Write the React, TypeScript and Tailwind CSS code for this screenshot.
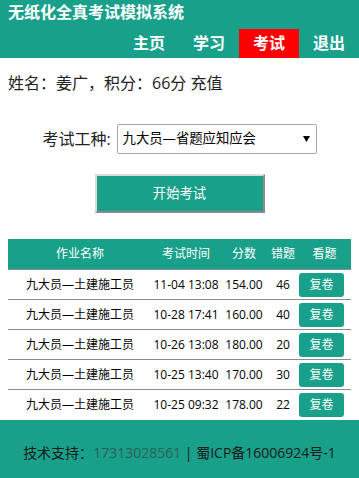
import React from "react";

const rows = [
  { name: "九大员—土建施工员", time: "11-04 13:08", score: "154.00", wrong: "46" },
  { name: "九大员—土建施工员", time: "10-28 17:41", score: "160.00", wrong: "40" },
  { name: "九大员—土建施工员", time: "10-26 13:08", score: "180.00", wrong: "20" },
  { name: "九大员—土建施工员", time: "10-25 13:40", score: "170.00", wrong: "30" },
  { name: "九大员—土建施工员", time: "10-25 09:32", score: "178.00", wrong: "22" },
];

const font = { fontFamily: '"Open Sans", "Noto Sans CJK SC", sans-serif' };

export default function App() {
  return (
    <div className="w-[359px] bg-white text-[#333]" style={font}>
      <header className="bg-[#18a08a] text-white font-bold text-[16px]">
        <div className="h-[29px] pl-2 leading-[25px]">无纸化全真考试模拟系统</div>
        <nav className="flex justify-end h-[29px]">
          <a className="w-[60px] text-center leading-[28px]">主页</a>
          <a className="w-[60px] text-center leading-[28px]">学习</a>
          <a className="w-[60px] text-center leading-[28px] bg-[#ff0000]">考试</a>
          <a className="w-[60px] text-center leading-[28px]">退出</a>
        </nav>
      </header>

      <div className="mt-[13px] h-[24px] pl-2 text-[16px] leading-[24px] text-[#222]">
        姓名：姜广，积分：66分 充值
      </div>

      <div className="mt-[29px] flex items-center justify-center gap-[6px]">
        <span className="text-[16px] leading-[30px] text-[#222]">考试工种:</span>
        <div className="relative w-[200px] h-[30px]">
          <select
            className="appearance-none w-full h-full border border-[#a9a9a9] rounded-[2px] bg-white pl-[5px] text-[13.33px] text-black outline-none"
            style={font}
          >
            <option>九大员—省题应知应会</option>
          </select>
          <svg className="absolute right-[7px] top-[12px] pointer-events-none" width="7" height="6" viewBox="0 0 7 6">
            <polygon points="0,0 7,0 3.5,6" fill="#000" />
          </svg>
        </div>
      </div>

      <div className="mt-[20px] flex justify-center">
        <button
          className="w-[170px] h-[39px] bg-[#18a08a] text-white text-[13.33px] border-2 border-solid border-t-[#dcdcdc] border-l-[#dcdcdc] border-b-[#8a8a8a] border-r-[#8a8a8a]"
          style={font}
        >
          开始考试
        </button>
      </div>

      <div className="mt-[26px] mx-2 text-[12px]">
        <div className="grid grid-cols-[144px_68px_48px_30px_1fr] h-[31px] bg-[#18a08a] text-white items-center text-center border-b border-[#8c8c8c] leading-[30px]">
          <span>作业名称</span>
          <span>考试时间</span>
          <span>分数</span>
          <span>错题</span>
          <span>看题</span>
        </div>
        {rows.map((r, i) => (
          <div
            key={i}
            className={`grid grid-cols-[144px_68px_48px_30px_1fr] items-center text-center text-black h-[30px] ${
              i < rows.length - 1 ? "border-b border-[#8c8c8c]" : ""
            }`}
          >
            <span className="whitespace-nowrap">{r.name}</span>
            <span className="whitespace-nowrap">{r.time}</span>
            <span className="whitespace-nowrap">{r.score}</span>
            <span>{r.wrong}</span>
            <span className="flex justify-start pl-[1px]">
              <span className="w-[45px] h-[24px] rounded-[3px] bg-[#18a08a] text-white leading-[24px] text-center">复卷</span>
            </span>
          </div>
        ))}
      </div>

      <footer className="bg-[#18a08a] h-[66px] leading-[66px] text-center text-[14px] text-[#1a1a1a]">
        技术支持：<span className="text-[#2d5f57]">17313028561</span> | 蜀ICP备16006924号-1
      </footer>
    </div>
  );
}
